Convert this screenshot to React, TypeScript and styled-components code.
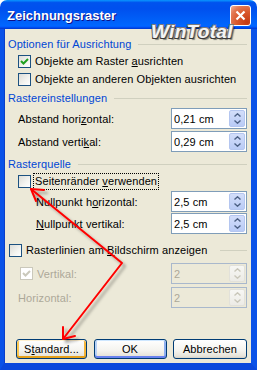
import React from "react";
import styled, { createGlobalStyle, css } from "styled-components";

const GlobalStyle = createGlobalStyle`
  html, body {
    margin: 0;
    padding: 0;
    background: #ffffff;
  }
  body {
    font-family: "Liberation Sans", Arial, sans-serif;
    font-size: 11px;
    letter-spacing: 0.1px;
    color: #000000;
  }
`;

const Window = styled.div`
  position: relative;
  width: 257px;
  height: 370px;
  display: flex;
  flex-direction: column;
  overflow: hidden;
`;

const TitleBar = styled.div`
  height: 29px;
  flex: none;
  display: flex;
  align-items: center;
  justify-content: space-between;
  padding: 0 6px 0 7px;
  border-radius: 7px 7px 0 0;
  background: linear-gradient(
    to bottom,
    #0997ff 0%,
    #0053ee 9%,
    #0050ee 30%,
    #0060f8 70%,
    #0066ff 88%,
    #005bff 93%,
    #003dd7 97%,
    #003dd7 100%
  );
`;

const Title = styled.span`
  color: #ffffff;
  font: bold 13px "Liberation Sans", Arial, sans-serif;
  letter-spacing: 0;
  text-shadow: 1px 1px 0 #0f1089;
  margin-top: 1px;
`;

const CloseButton = styled.div`
  width: 19px;
  height: 19px;
  margin-top: 2px;
  border: 1px solid #ffffff;
  border-radius: 3px;
  display: flex;
  align-items: center;
  justify-content: center;
  background: radial-gradient(
    circle at 85% 85%,
    #c53a12 0%,
    #d9572b 45%,
    #e37a55 75%,
    #f2b59c 100%
  );
`;

const Watermark = styled.div`
  position: absolute;
  left: 151px;
  top: 21px;
  font: italic bold 19px "Liberation Sans", Arial, sans-serif;
  color: #f4f4f4;
  letter-spacing: 0.3px;
  text-shadow: -1px -1px 0 #7a7a7a, 1px -1px 0 #7a7a7a, -1px 1px 0 #3a3a3a,
    1px 1px 0 #3a3a3a, 2px 2px 1px rgba(0, 0, 0, 0.45);
  pointer-events: none;
`;

const Body = styled.div`
  flex: 1;
  display: flex;
  flex-direction: column;
  background: #ece9d8;
  border-left: 4px solid #0a52e8;
  border-right: 6px solid #0a52e8;
  border-bottom: 7px solid #0a48dc;
  box-shadow: inset 1px 0 0 #0b3fc9;
  padding: 8px 4px 4px 4px;
`;

const Heading = styled.div<{ $mt?: number; $plain?: boolean }>`
  height: 14px;
  margin-top: ${(p) => p.$mt ?? 0}px;
  display: flex;
  align-items: center;
  gap: 7px;
  color: ${(p) => (p.$plain ? "#000000" : "#0046d5")};
  padding-left: ${(p) => (p.$plain ? 1 : 0)}px;
  white-space: nowrap;

  &::after {
    content: "";
    flex: 1;
    height: 1px;
    background: #d0d0bf;
    margin-left: ${(p) => (p.$plain ? 6 : 0)}px;
  }
`;

const CheckRow = styled.div<{ $mt?: number; $indent: number }>`
  height: 18px;
  margin-top: ${(p) => p.$mt ?? 0}px;
  padding-left: ${(p) => p.$indent}px;
  display: flex;
  align-items: center;
  gap: 4px;
  white-space: nowrap;
`;

const FieldRow = styled.div<{ $mt?: number; $indent: number }>`
  height: 21px;
  margin-top: ${(p) => p.$mt ?? 0}px;
  padding-left: ${(p) => p.$indent}px;
  display: flex;
  align-items: center;
  justify-content: space-between;
  white-space: nowrap;
`;

const LabelGroup = styled.div`
  display: flex;
  align-items: center;
  gap: 4px;
`;

const Label = styled.span<{ $disabled?: boolean; $focus?: boolean }>`
  color: ${(p) => (p.$disabled ? "#aca899" : "#000000")};
  ${(p) =>
    p.$focus &&
    css`
      border: 1px dotted #000000;
      padding: 1px 1px 2px 1px;
      margin-left: -2px;
    `}
`;

const U = styled.span`
  text-decoration: underline;
  text-underline-offset: 1px;
`;

const Box = styled.span<{ $disabled?: boolean }>`
  width: 13px;
  height: 13px;
  box-sizing: border-box;
  flex: none;
  display: inline-flex;
  align-items: center;
  justify-content: center;
  border: 1px solid ${(p) => (p.$disabled ? "#cac8bb" : "#1c5180")};
  background: ${(p) =>
    p.$disabled
      ? "#ffffff"
      : "linear-gradient(135deg, #dcdcd7 0%, #f4f4f0 60%, #ffffff 100%)"};
`;

const SpinBox = styled.div<{ $disabled?: boolean }>`
  width: 76px;
  height: 21px;
  box-sizing: border-box;
  display: flex;
  align-items: center;
  border: 1px solid ${(p) => (p.$disabled ? "#a9b8cc" : "#7f9db9")};
  background: ${(p) => (p.$disabled ? "#ece9d8" : "#ffffff")};
  color: ${(p) => (p.$disabled ? "#aca899" : "#000000")};
  padding: 1px 1px 1px 2px;
`;

const SpinValue = styled.span`
  flex: 1;
`;

const Spinner = styled.div<{ $disabled?: boolean }>`
  width: 16px;
  height: 17px;
  border-radius: 2px;
  display: flex;
  flex-direction: column;
  align-items: center;
  justify-content: space-around;
  padding: 1px 0;
  box-sizing: border-box;
  background: ${(p) =>
    p.$disabled
      ? "linear-gradient(to bottom, #f7f7f4, #ecebe6)"
      : "linear-gradient(to bottom, #d3defa, #b9cbf6)"};
  border: 1px solid ${(p) => (p.$disabled ? "#e2e1da" : "#b4c6f0")};
`;

const ButtonRow = styled.div`
  margin-top: auto;
  display: flex;
  justify-content: space-between;
  padding-left: 8px;
`;

const Button = styled.div<{ $w: number; $variant?: "hover" | "default" }>`
  width: ${(p) => p.$w}px;
  height: 20px;
  box-sizing: border-box;
  border: 1px solid #003c74;
  border-radius: 3px;
  display: flex;
  align-items: center;
  justify-content: center;
  background: linear-gradient(to bottom, #ffffff 0%, #f4f3ee 60%, #e6e3d9 90%, #d6d0c5 100%);
  ${(p) =>
    p.$variant === "hover" &&
    css`
      box-shadow: inset 0 1px 0 #fff0cf, inset 0 -2px 0 #e5a01a,
        inset 2px 0 0 #fac853, inset -2px 0 0 #f4b53a;
    `}
  ${(p) =>
    p.$variant === "default" &&
    css`
      box-shadow: inset 0 1px 0 #cee7ff, inset 0 -2px 0 #6982ee,
        inset 2px 0 0 #b8d2f5, inset -2px 0 0 #8fb0f0;
    `}
`;

const Overlay = styled.svg`
  position: absolute;
  left: 0;
  top: 0;
  pointer-events: none;
`;

function Check({ checked, disabled }: { checked?: boolean; disabled?: boolean }) {
  return (
    <Box $disabled={disabled}>
      {checked && (
        <svg width="9" height="9" viewBox="0 0 9 9">
          <path
            d="M1 4 L3.5 6.5 L8 2"
            fill="none"
            stroke={disabled ? "#cac8bb" : "#21a121"}
            strokeWidth="2"
          />
        </svg>
      )}
    </Box>
  );
}

function Spin({ value, disabled }: { value: string; disabled?: boolean }) {
  const c = disabled ? "#c9c7ba" : "#4d6185";
  return (
    <SpinBox $disabled={disabled}>
      <SpinValue>{value}</SpinValue>
      <Spinner $disabled={disabled}>
        <svg width="7" height="4" viewBox="0 0 7 4">
          <path d="M0.5 3.5 L3.5 0.8 L6.5 3.5" fill="none" stroke={c} strokeWidth="1.4" />
        </svg>
        <svg width="7" height="4" viewBox="0 0 7 4">
          <path d="M0.5 0.5 L3.5 3.2 L6.5 0.5" fill="none" stroke={c} strokeWidth="1.4" />
        </svg>
      </Spinner>
    </SpinBox>
  );
}

export default function App() {
  return (
    <>
      <GlobalStyle />
      <Window>
        <TitleBar>
          <Title>Zeichnungsraster</Title>
          <CloseButton>
            <svg width="11" height="11" viewBox="0 0 11 11">
              <path d="M1.5 1.5 L9.5 9.5 M9.5 1.5 L1.5 9.5" stroke="#ffffff" strokeWidth="2.2" />
            </svg>
          </CloseButton>
        </TitleBar>
        <Body>
          <Heading>Optionen für Ausrichtung</Heading>
          <CheckRow $mt={1} $indent={10}>
            <Check checked />
            <Label>
              Objekte am Raster <U>a</U>usrichten
            </Label>
          </CheckRow>
          <CheckRow $indent={10}>
            <Check />
            <Label>Objekte an anderen Objekten ausrichten</Label>
          </CheckRow>

          <Heading $mt={3}>Rastereinstellungen</Heading>
          <FieldRow $mt={3} $indent={10}>
            <Label>
              Abstand hori<U>z</U>ontal:
            </Label>
            <Spin value="0,21 cm" />
          </FieldRow>
          <FieldRow $mt={2} $indent={10}>
            <Label>
              Abstand verti<U>k</U>al:
            </Label>
            <Spin value="0,29 cm" />
          </FieldRow>

          <Heading $mt={5}>Rasterquelle</Heading>
          <CheckRow $mt={1} $indent={10}>
            <Check />
            <Label $focus>
              Seitenränder <U>v</U>erwenden
            </Label>
          </CheckRow>
          <FieldRow $mt={1} $indent={28}>
            <Label>
              Nullpunkt h<U>o</U>rizontal:
            </Label>
            <Spin value="2,5 cm" />
          </FieldRow>
          <FieldRow $mt={1} $indent={28}>
            <Label>
              <U>N</U>ullpunkt vertikal:
            </Label>
            <Spin value="2,5 cm" />
          </FieldRow>

          <Heading $mt={9} $plain>
            <LabelGroup>
              <Check />
              <Label>
                Rasterlinien am <U>B</U>ildschirm anzeigen
              </Label>
            </LabelGroup>
          </Heading>
          <FieldRow $mt={6} $indent={12}>
            <LabelGroup>
              <Check checked disabled />
              <Label $disabled>Vertikal:</Label>
            </LabelGroup>
            <Spin value="2" disabled />
          </FieldRow>
          <FieldRow $mt={3} $indent={10}>
            <Label $disabled>Horizontal:</Label>
            <Spin value="2" disabled />
          </FieldRow>

          <ButtonRow>
            <Button $w={71} $variant="hover">
              <span>
                S<U>t</U>andard...
              </span>
            </Button>
            <Button $w={73} $variant="default">
              OK
            </Button>
            <Button $w={74}>Abbrechen</Button>
          </ButtonRow>
        </Body>

        <Watermark>WinTotal</Watermark>

        <Overlay width="257" height="370" viewBox="0 0 257 370">
          <defs>
            <filter id="shadow" x="-20%" y="-20%" width="140%" height="140%">
              <feDropShadow dx="3" dy="3" stdDeviation="1.5" floodColor="#000000" floodOpacity="0.35" />
            </filter>
          </defs>
          <g
            filter="url(#shadow)"
            fill="none"
            stroke="#ff0000"
            strokeWidth="2"
            strokeLinecap="round"
            strokeLinejoin="round"
          >
            <polyline points="31,189 122,263 63,339" />
            <polyline points="44,190 31,189 36,201" />
            <polyline points="63,327 63,339 75,336" />
          </g>
        </Overlay>
      </Window>
    </>
  );
}
